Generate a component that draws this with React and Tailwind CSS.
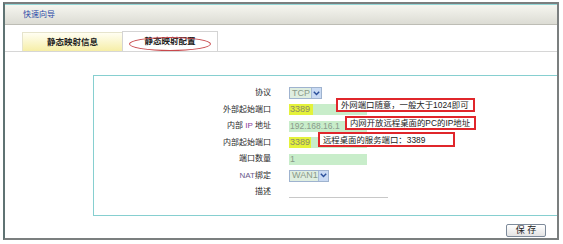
import React from "react";

const F = "font-['Liberation_Sans','Noto_Sans_CJK_SC',sans-serif]";

function Chevron() {
  return (
    <svg width="7" height="5" viewBox="0 0 7 5">
      <path d="M0.8 0.8 L3.5 3.6 L6.2 0.8" fill="none" stroke="#2a4f9a" strokeWidth="1.4" />
    </svg>
  );
}

function Select({ value, w }) {
  return (
    <div className={`flex h-[12px] ${w} border border-[#9fb3cf] bg-[#dfeee0] items-stretch`}>
      <div className="flex-1 flex items-center pl-[2px] text-[9px] leading-none text-[#8a9a8a]">{value}</div>
      <div className="w-[10px] bg-[#c9daf3] border-l border-[#a7bbd8] flex items-center justify-center">
        <Chevron />
      </div>
    </div>
  );
}

function Row({ label, children }) {
  return (
    <div className="flex h-[16.5px] items-center">
      <div className="w-[177px] text-right text-[8px] leading-none text-[#2a2a2a]">{label}</div>
      <div className="ml-[18px] relative flex items-center">{children}</div>
    </div>
  );
}

function Note({ className, children }) {
  return (
    <div className={`absolute border-2 border-[#e0262b] bg-white flex items-center pl-[3px] pr-[4px] text-[8.4px] leading-none text-[#222] whitespace-nowrap ${className}`}>
      {children}
    </div>
  );
}

export default function App() {
  return (
    <div className={`w-[563px] h-[244px] bg-white pt-[2px] pl-[3px] ${F}`}>
      <div className="w-[556px] h-[238px] border-2 border-[#7b7f7f] border-l-[#5f7373] flex flex-col">
        <div className="h-px bg-[#93d6d6]" />
        <div className="h-[20px] bg-gradient-to-b from-[#f6f6f0] to-[#dcdcd4] border-b border-[#bdbdb5] flex items-center pl-[18px]">
          <span className="text-[8px] leading-none text-[#2a4aa8]">快速向导</span>
        </div>
        <div className="mt-[7px] flex items-end pl-[17px] border-b border-[#d6d6d6] h-[20px]">
          <div className="w-[100px] h-[19px] bg-gradient-to-b from-[#fffef2] to-[#f6eea6] border-t border-l border-[#e6e4cc] flex items-center justify-center">
            <span className="text-[8.5px] font-bold leading-none text-[#222]">静态映射信息</span>
          </div>
          <div className="relative w-[96px] h-[20px] bg-white border-t border-l border-r border-[#d4d4d4] flex items-center justify-center">
            <span className="text-[8.5px] font-bold leading-none text-[#222]">静态映射配置</span>
            <div className="absolute left-[6px] top-[5px] w-[82px] h-[14px] rounded-[50%] border border-[#c8484c]" />
          </div>
        </div>
        <div className="ml-[88px] mt-[23px] h-[141px] border border-[#86cfd0] border-r-0 pt-[9px]">
          <Row label="协议">
            <Select value="TCP" w="w-[33px]" />
          </Row>
          <Row label="外部起始端口">
            <div className="w-[78px] h-[11px] bg-[#c8edca] flex">
              <div className="w-[24px] h-full bg-[#e4f23a] text-[9px] leading-[11px] text-[#8a8a6a] pl-[1px]">3389</div>
            </div>
            <Note className="left-[47px] top-[-6px] h-[14px]">外网端口随意，一般大于1024即可</Note>
          </Row>
          <Row label={<span>内部 <span className="text-[#8a3d9a]">IP</span> 地址</span>}>
            <div className="w-[78px] h-[11px] bg-[#c8edca] text-[8.5px] leading-[11px] text-[#8a9a8a] pl-[1px]">192.168.16.1</div>
            <Note className="left-[56px] top-[-5px] h-[14px]">内网开放远程桌面的PC的IP地址</Note>
          </Row>
          <Row label="内部起始端口">
            <div className="w-[78px] h-[11px] bg-[#c8edca] flex">
              <div className="w-[22px] h-full bg-[#e4f23a] text-[9px] leading-[11px] text-[#8a8a6a] pl-[1px]">3389</div>
            </div>
            <Note className="left-[29px] top-[-5px] w-[137px] h-[15px]">远程桌面的服务端口：3389</Note>
          </Row>
          <Row label="端口数量">
            <div className="w-[78px] h-[11px] bg-[#c8edca] text-[9px] leading-[11px] text-[#8a9a8a] pl-[1px]">1</div>
          </Row>
          <Row label={<span><span className="text-[#6a5a8a]">NAT</span>绑定</span>}>
            <Select value="WAN1" w="w-[40px]" />
          </Row>
          <Row label="描述">
            <div className="w-[99px] h-[11px] border-b border-[#c8c8c8]" />
          </Row>
        </div>
        <div className="flex justify-end pr-[11px] mt-[8px]">
          <div className="w-[40px] h-[13px] rounded-[2px] border border-[#7d8a9a] bg-gradient-to-b from-[#ffffff] to-[#e4e4e4] flex items-center justify-center text-[9px] leading-none text-[#222]">
            保 存
          </div>
        </div>
      </div>
    </div>
  );
}
